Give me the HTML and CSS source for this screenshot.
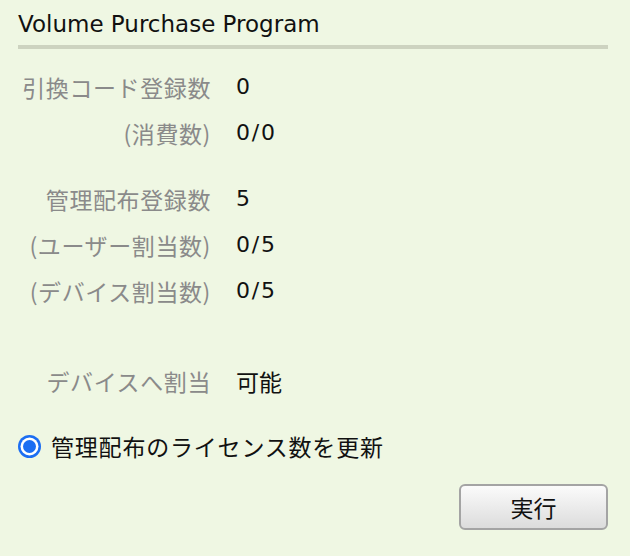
FILE: index.html
```html
<!DOCTYPE html>
<html lang="ja">
<head>
<meta charset="utf-8">
<link rel="stylesheet" href="styles.css">
</head>
<body>
<div class="panel">
  <h1 class="title">Volume Purchase Program</h1>
  <div class="grid">
    <div class="label">引換コード登録数</div><div class="value">0</div>
    <div class="label">(消費数)</div><div class="value">0/0</div>
    <div class="spacer"></div>
    <div class="label">管理配布登録数</div><div class="value">5</div>
    <div class="label">(ユーザー割当数)</div><div class="value">0/5</div>
    <div class="label">(デバイス割当数)</div><div class="value">0/5</div>
    <div class="spacer big"></div>
    <div class="label">デバイスへ割当</div><div class="value jp">可能</div>
  </div>
  <label class="radio-row">
    <span class="radio"><span class="dot"></span></span>
    <span class="radio-text">管理配布のライセンス数を更新</span>
  </label>
  <div class="actions">
    <button class="btn" type="button">実行</button>
  </div>
</div>
</body>
</html>
```
FILE: styles.css
```css
html, body {
  margin: 0;
  padding: 0;
  background: #eff7e3;
}
body {
  font-family: "DejaVu Sans", "Noto Sans CJK JP", sans-serif;
  color: #111;
}
.panel {
  padding: 9px 22px 0 18px;
}
.title {
  margin: 0;
  font-size: 23px;
  font-weight: normal;
  line-height: 30px;
  padding-bottom: 6px;
  border-bottom: 4px solid #cdd3c0;
}
.grid {
  display: grid;
  grid-template-columns: 192px auto;
  column-gap: 26px;
  margin-top: 15px;
  font-size: 22px;
}
.label, .value {
  height: 46px;
  line-height: 46px;
  white-space: nowrap;
}
.label {
  color: #8a8a8a;
  text-align: right;
  font-family: "Noto Sans CJK JP", sans-serif;
  font-size: 23px;
  letter-spacing: 0.6px;
  margin-right: -1px;
}
.value {
  color: #111;
  letter-spacing: 1.8px;
}
.value.jp {
  font-family: "Noto Sans CJK JP", sans-serif;
  font-size: 23px;
  letter-spacing: 0;
}
.spacer {
  grid-column: 1 / 3;
  height: 20px;
}
.spacer.big {
  height: 44px;
}
.radio-row {
  display: flex;
  align-items: center;
  gap: 10px;
  margin-top: 22px;
  height: 40px;
}
.radio {
  width: 23px;
  height: 23px;
  border-radius: 50%;
  background: #1c6ef2;
  display: flex;
  align-items: center;
  justify-content: center;
}
.dot {
  width: 13px;
  height: 13px;
  border-radius: 50%;
  background: #1c6ef2;
  box-shadow: 0 0 0 2.5px #fff;
}
.radio-text {
  font-family: "Noto Sans CJK JP", sans-serif;
  font-size: 23px;
  letter-spacing: 0.8px;
  color: #111;
}
.actions {
  display: flex;
  justify-content: flex-end;
  margin-top: 18px;
}
.btn {
  width: 149px;
  height: 46px;
  border: 2px solid #a4a4a4;
  border-radius: 6px;
  background: linear-gradient(#fbfbfb, #dcdcdc);
  font-family: "Noto Sans CJK JP", sans-serif;
  font-size: 23px;
  color: #111;
  padding: 0;
}
```
